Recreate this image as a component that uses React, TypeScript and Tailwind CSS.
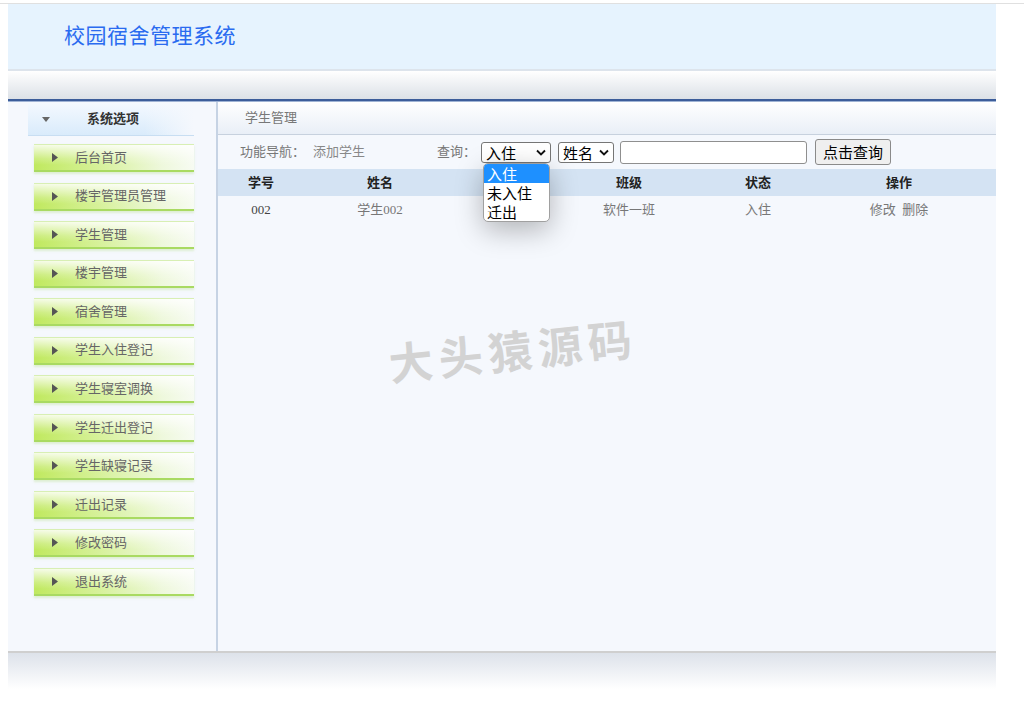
import React from "react";

// 校园宿舍管理系统 - 学生管理页面

const menus = [
  "后台首页",
  "楼宇管理员管理",
  "学生管理",
  "楼宇管理",
  "宿舍管理",
  "学生入住登记",
  "学生寝室调换",
  "学生迁出登记",
  "学生缺寝记录",
  "迁出记录",
  "修改密码",
  "退出系统",
];

const serif = "font-['Liberation_Serif','Noto_Sans_CJK_SC',serif]";
const sans = "font-['Noto_Sans_CJK_SC','Liberation_Sans',sans-serif]";

function Chevron() {
  return (
    <svg width="10" height="7" viewBox="0 0 10 7" className="shrink-0">
      <path d="M1 1.5 L5 5.5 L9 1.5" fill="none" stroke="#111" strokeWidth="1.8" />
    </svg>
  );
}

function MenuItem({ label }: { label: string }) {
  return (
    <div className="h-[28px] mx-[26px] w-[160px] border-t border-[#d8efb4] border-b-2 border-b-[#a9da62] shadow-[0_2px_2px_rgba(200,230,170,0.5)] bg-[linear-gradient(to_bottom,rgba(255,255,255,0.85),rgba(255,255,255,0.2)_55%,rgba(255,255,255,0)_80%),linear-gradient(to_right,#c0e95f,#d6f199_40%,#eef8dc_80%,#f7fbf2)] flex items-center">
      <svg width="6" height="9" viewBox="0 0 6 9" className="ml-[18px]">
        <path d="M0 0 L6 4.5 L0 9 Z" fill="#555" />
      </svg>
      <span className={`${serif} ml-[17px] text-[13px] text-[#666]`}>{label}</span>
    </div>
  );
}

export default function App() {
  return (
    <div className="min-h-[706px] bg-white pt-[3px]">
      <div className="h-px bg-[#e0e0e0]" />
      <div className="w-[988px] ml-2">
        {/* header */}
        <div className="h-[67px] bg-[#e6f3fe] border-b-2 border-[#dde4ec] flex items-center pl-[56px]">
          <h1 className={`${serif} text-[21px] text-[#2a6bf0] tracking-[0.5px]`}>校园宿舍管理系统</h1>
        </div>
        <div className="h-[28px] bg-gradient-to-b from-white to-[#dce1e7]" />
        <div className="h-[2px] bg-[#3c5d9a]" />
        <div className="h-px bg-[#9fb3d4]" />

        {/* main */}
        <div className="h-[549px] flex bg-[#f5f8fd]">
          <div className="w-[210px] shrink-0 border-r-2 border-[#c6d3e4]">
            <div className="mt-[1px] ml-[20px] w-[166px] h-[33px] border-b border-[#c8def2] bg-[linear-gradient(to_right,rgba(245,248,253,0)_70%,#f5f8fd),linear-gradient(to_bottom,#f4f9ff,#d9ebfb)] flex items-center">
              <svg width="8" height="5" viewBox="0 0 8 5" className="ml-[14px]">
                <path d="M0 0 L8 0 L4 5 Z" fill="#666" />
              </svg>
              <span className={`${serif} ml-[37px] text-[13px] font-bold text-[#333]`}>系统选项</span>
            </div>
            <div className="mt-[8px] flex flex-col gap-[10.55px]">
              {menus.map((m) => (
                <MenuItem key={m} label={m} />
              ))}
            </div>
          </div>

          <div className="flex-1 relative">
            <div className="h-[33px] border-b border-[#c7d1de] bg-gradient-to-b from-white to-[#e9eff7] flex items-center pl-[27px]">
              <span className={`${serif} text-[13px] text-[#777]`}>学生管理</span>
            </div>
            <div className="h-[34px] flex items-center pl-[22px]">
              <span className={`${serif} text-[13px] text-[#777]`}>功能导航：</span>
              <span className={`${serif} text-[13px] text-[#888] ml-[8px]`}>添加学生</span>
              <span className={`${serif} text-[13px] text-[#777] ml-[72px]`}>查询：</span>
              <div className="relative ml-[5px]">
                <div className={`${sans} w-[70px] h-[21px] border border-[#767676] rounded-[3px] bg-white flex items-center justify-between px-[4px] text-[15px] leading-none text-black`}>
                  <span>入住</span>
                  <Chevron />
                </div>
                <div className={`${sans} absolute left-[2px] top-[21px] w-[67px] bg-white border border-[#a0a0a0] rounded-[5px] shadow-[0_8px_28px_rgba(0,0,0,0.28)] overflow-hidden text-[15px] leading-[19px] z-10`}>
                  <div className="bg-[#1e90ff] text-white pl-[3px]">入住</div>
                  <div className="text-black pl-[3px]">未入住</div>
                  <div className="text-black pl-[3px]">迁出</div>
                </div>
              </div>
              <div className={`${sans} ml-[7px] w-[56px] h-[21px] border border-[#767676] rounded-[3px] bg-white flex items-center justify-between px-[4px] text-[15px] leading-none text-black`}>
                <span>姓名</span>
                <Chevron />
              </div>
              <div className="ml-[6px] w-[187px] h-[23px] border border-[#8f8f8f] rounded-[3px] bg-white" />
              <div className={`${sans} ml-[8px] w-[76px] h-[26px] border border-[#8a8a8a] rounded-[3px] bg-[#efefef] flex items-center justify-center text-[15px] text-black`}>
                点击查询
              </div>
            </div>

            {/* table */}
            <div className={`${serif} text-[13px]`}>
              <div className="h-[27px] bg-[#d4e3f3] grid grid-cols-[86px_152px_103px_140px_118px_164px] items-center text-center font-bold text-[#222]">
                <div>学号</div>
                <div>姓名</div>
                <div></div>
                <div>班级</div>
                <div>状态</div>
                <div>操作</div>
              </div>
              <div className="h-[27px] grid grid-cols-[86px_152px_103px_140px_118px_164px] items-center text-center text-[#777]">
                <div className="text-[#444]">002</div>
                <div>学生002</div>
                <div></div>
                <div>软件一班</div>
                <div>入住</div>
                <div>修改&nbsp;&nbsp;删除</div>
              </div>
            </div>

            {/* watermark */}
            <div className={`${sans} absolute left-[170px] top-[214px] -rotate-[6deg] text-[44px] font-bold text-[#d3d3d3] tracking-[6px] select-none pointer-events-none`}>
              大头猿源码
            </div>
          </div>
        </div>

        {/* footer */}
        <div className="h-[2px] bg-[#cfcfcf]" />
        <div className="h-[36px] bg-gradient-to-b from-[#dde2ea] to-white" />
      </div>
    </div>
  );
}
